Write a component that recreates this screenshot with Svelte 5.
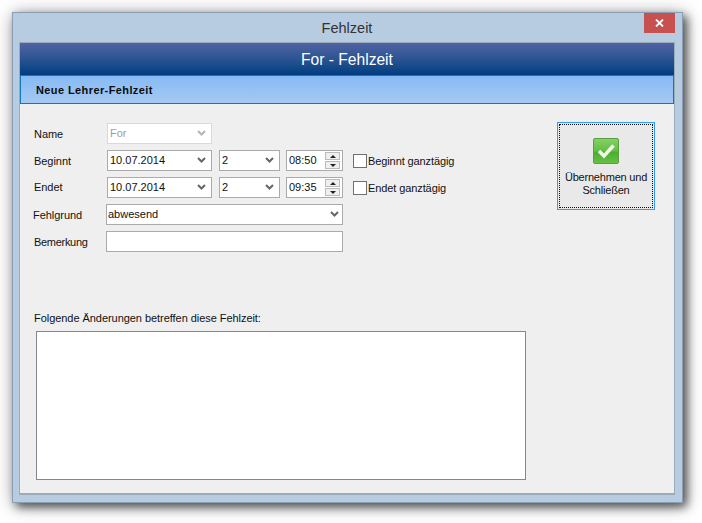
<script>
  const chevron = "M1 1 L4.5 4.5 L8 1";
</script>

<div class="page">
  <div class="window">
    <div class="titlebar">Fehlzeit</div>
    <button class="close" aria-label="Schließen">
      <svg width="9" height="8" viewBox="0 0 9 8"><path d="M1 0.5 L8 7.5 M8 0.5 L1 7.5" stroke="#fff" stroke-width="1.8" fill="none"/></svg>
    </button>
    <div class="client">
      <div class="banner">For - Fehlzeit</div>
      <div class="subbanner">Neue Lehrer-Fehlzeit</div>
      <div class="content">
        <div class="main">
          <div class="form">
            <div class="row">
              <span class="label">Name</span>
              <div class="field combo date disabled"><span>For</span>
                <svg width="9" height="6" viewBox="0 0 9 6"><path d={chevron} /></svg></div>
            </div>
            <div class="row">
              <span class="label">Beginnt</span>
              <div class="field combo date"><span>10.07.2014</span>
                <svg width="9" height="6" viewBox="0 0 9 6"><path d={chevron} /></svg></div>
              <div class="field combo period"><span>2</span>
                <svg width="9" height="6" viewBox="0 0 9 6"><path d={chevron} /></svg></div>
              <div class="field time"><span>08:50</span>
                <div class="spin"><i class="up"></i><i class="down"></i></div></div>
              <label class="check"><b></b>Beginnt ganztägig</label>
            </div>
            <div class="row">
              <span class="label endet">Endet</span>
              <div class="field combo date"><span>10.07.2014</span>
                <svg width="9" height="6" viewBox="0 0 9 6"><path d={chevron} /></svg></div>
              <div class="field combo period"><span>2</span>
                <svg width="9" height="6" viewBox="0 0 9 6"><path d={chevron} /></svg></div>
              <div class="field time"><span>09:35</span>
                <div class="spin"><i class="up"></i><i class="down"></i></div></div>
              <label class="check"><b></b>Endet ganztägig</label>
            </div>
            <div class="row wide">
              <span class="label fehl">Fehlgrund</span>
              <div class="field combo full"><span>abwesend</span>
                <svg width="9" height="6" viewBox="0 0 9 6"><path d={chevron} /></svg></div>
            </div>
            <div class="row wide">
              <span class="label bem">Bemerkung</span>
              <div class="field full"></div>
            </div>
          </div>
          <div class="changes-label">Folgende Änderungen betreffen diese Fehlzeit:</div>
          <div class="changes"></div>
        </div>
        <button class="apply">
          <span class="inner">
            <span class="ok">
              <svg width="26" height="26" viewBox="0 0 26 26">
                <defs>
                  <linearGradient id="g" x1="0" y1="0" x2="0" y2="1">
                    <stop offset="0" stop-color="#86d066"/>
                    <stop offset="0.5" stop-color="#62bf42"/>
                    <stop offset="0.55" stop-color="#4cae2e"/>
                    <stop offset="1" stop-color="#66c244"/>
                  </linearGradient>
                </defs>
                <rect x="0.5" y="0.5" width="25" height="25" rx="1.5" fill="url(#g)" stroke="#57a23f"/>
                <path d="M6 13 L11 18 L20.5 7.5" fill="none" stroke="#eef8e8" stroke-width="3.6"/>
              </svg>
            </span>
            <span class="apply-text">Übernehmen und<br/>Schließen</span>
          </span>
        </button>
      </div>
    </div>
  </div>
</div>

<style>
  :global(body) { margin: 0; background: #fff; }
  .page {
    width: 702px;
    height: 523px;
    padding: 12px 19px 20px 12px;
    box-sizing: border-box;
    font-family: "Liberation Sans", Arial, sans-serif;
    font-size: 11px;
    color: #111;
    overflow: hidden;
  }
  .window {
    position: relative;
    width: 671px;
    height: 491px;
    box-sizing: border-box;
    display: flex;
    flex-direction: column;
    background: #b7cbe1;
    border: 1px solid #8b9db3;
    box-shadow: 4px 4px 9px rgba(0,0,0,.6), 1px 2px 18px rgba(0,0,0,.35);
    padding: 0 7px 7px 6px;
  }
  .titlebar {
    height: 29px;
    flex: none;
    display: flex;
    align-items: center;
    justify-content: center;
    font-size: 14.5px;
    color: #333;
    padding-top: 1px;
    box-sizing: border-box;
  }
  .close {
    position: absolute;
    top: 0;
    right: 7px;
    width: 31px;
    height: 20px;
    border: 0;
    padding: 0;
    background: #c75050;
    display: flex;
    align-items: center;
    justify-content: center;
  }
  .client {
    flex: 1;
    display: flex;
    flex-direction: column;
    background: #efefef;
    border: 1px solid #9aabbb;
    border-bottom-width: 2px;
    min-height: 0;
  }
  .banner {
    height: 32px;
    flex: none;
    box-sizing: border-box;
    padding-top: 1px;
    display: flex;
    align-items: center;
    justify-content: center;
    color: #fff;
    font-size: 15.6px;
    background: linear-gradient(#5163a3, #2b5492 50%, #003d80);
  }
  .subbanner {
    height: 29px;
    flex: none;
    box-sizing: border-box;
    display: flex;
    align-items: center;
    padding-left: 15px;
    font-weight: bold;
    font-size: 11px;
    letter-spacing: .4px;
    color: #0b0b0b;
    background: linear-gradient(#87baf5, #a5c9f3);
    border: 1px solid #0f78b8;
  }
  .content {
    flex: 1;
    display: flex;
    padding: 19px 18px 0 14px;
    min-height: 0;
  }
  .main { width: 492px; flex: none; }
  .form { display: flex; flex-direction: column; gap: 6px; }
  .row { display: flex; align-items: center; height: 21px; gap: 6px; }
  .label { width: 73px; margin-right: -6px; flex: none; letter-spacing: -.05px; }
  .endet { position: relative; top: -1px; }
  .bem { letter-spacing: -.3px; }
  .field {
    height: 21px;
    box-sizing: border-box;
    background: #fff;
    border: 1px solid #ababab;
    display: flex;
    align-items: center;
    padding: 0 0 1px 2px;
    justify-content: space-between;
    flex: none;
  }
  .field svg path { fill: none; stroke: #666; stroke-width: 2; }
  .combo { padding-right: 5px; }
  .date { width: 105px; margin-right: 1px; }
  .period { width: 61px; }
  .time { width: 57px; padding-right: 2px; padding-bottom: 0; }
  .time span { position: relative; top: -1px; }
  .full { width: 237px; padding-left: 1px; }
  .combo.full { padding-right: 3px; }
  .wide { gap: 0; }
  .wide .label { width: 72px; margin-right: 0; }
  .wide .fehl { width: 73px; margin-left: -1px; }
  .disabled { border-color: #d9d9d9; color: #9d9d9d; }
  .disabled svg path { stroke: #b5b5b5; }
  .spin { display: flex; flex-direction: column; gap: 1px; }
  .spin i {
    width: 15px;
    height: 8px;
    display: flex;
    align-items: center;
    justify-content: center;
    background: #efefef;
    border: 1px solid #bbb;
    box-sizing: border-box;
  }
  .spin i::after {
    content: "";
    border-left: 3px solid transparent;
    border-right: 3px solid transparent;
  }
  .spin .up::after { border-bottom: 3px solid #222; }
  .spin .down::after { border-top: 3px solid #222; }
  .check { display: flex; align-items: center; margin-left: 4px; letter-spacing: -.1px; }
  .check b {
    width: 14px;
    height: 14px;
    box-sizing: border-box;
    background: #fff;
    border: 1px solid #707070;
    margin-right: 1px;
    flex: none;
  }
  .changes-label { margin-top: 59px; letter-spacing: -.05px; height: 15px; line-height: 15px; }
  .changes {
    margin: 5px 0 0 2px;
    width: 490px;
    height: 149px;
    box-sizing: border-box;
    background: #fff;
    border: 1px solid #828790;
  }
  .apply {
    margin-left: 31px;
    margin-top: -1px;
    width: 98px;
    height: 88px;
    box-sizing: border-box;
    border: 1px solid #3399ff;
    background: #e9e9e9;
    padding: 1px;
    font: inherit;
    color: inherit;
    flex: none;
  }
  .inner {
    display: flex;
    flex-direction: column;
    align-items: center;
    height: 100%;
    box-sizing: border-box;
    border: 1px dotted #111;
    padding-top: 13px;
  }
  .ok { height: 26px; display: block; margin-bottom: 7px; }
  .ok svg { display: block; }
  .apply-text { line-height: 13px; text-align: center; letter-spacing: -.2px; white-space: nowrap; }
</style>
